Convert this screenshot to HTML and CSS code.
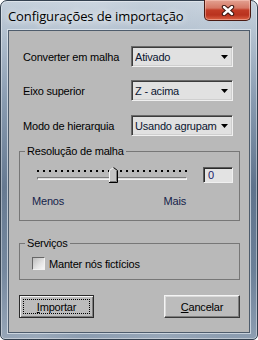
FILE: index.html
```html
<!DOCTYPE html>
<html>
<head>
<meta charset="utf-8">
<link rel="stylesheet" href="styles.css">
</head>
<body>
<div class="window">
  <div class="titlebar">
    <span class="title">Configurações de importação</span>
    <div class="close">
      <svg width="14" height="11" viewBox="0 0 14 11">
        <path d="M3 2 L11 9 M11 2 L3 9" stroke="#3c1712" stroke-width="4.4" stroke-linecap="round" fill="none"/>
        <path d="M3 2 L11 9 M11 2 L3 9" stroke="#fff" stroke-width="2.4" stroke-linecap="round" fill="none"/>
      </svg>
    </div>
  </div>
  <div class="client">
    <div class="row">
      <span class="lbl">Converter em malha</span>
      <div class="combo"><span class="val">Ativado</span><svg class="arrow" width="7" height="4" viewBox="0 0 7 4"><polygon points="0,0 7,0 3.5,4" fill="#000"/></svg></div>
    </div>
    <div class="row">
      <span class="lbl">Eixo superior</span>
      <div class="combo"><span class="val">Z - acima</span><svg class="arrow" width="7" height="4" viewBox="0 0 7 4"><polygon points="0,0 7,0 3.5,4" fill="#000"/></svg></div>
    </div>
    <div class="row">
      <span class="lbl">Modo de hierarquia</span>
      <div class="combo"><span class="val clip">Usando agrupamentos</span><svg class="arrow" width="7" height="4" viewBox="0 0 7 4"><polygon points="0,0 7,0 3.5,4" fill="#000"/></svg></div>
    </div>

    <fieldset class="group g1">
      <legend>Resolução de malha</legend>
      <div class="slider-row">
        <div class="slider">
          <div class="ticks">
            <i></i><i></i><i></i><i></i><i></i><i></i><i></i><i></i><i></i><i></i><i></i><i></i><i></i>
            <i></i><i></i><i></i><i></i><i></i><i></i><i></i><i></i><i></i><i></i><i></i><i></i><i></i>
          </div>
          <div class="track"></div>
          <svg class="thumb" style="left:72px" width="9" height="16" viewBox="0 0 9 16">
            <path d="M0.5 15.5 V3.5 L4.5 0.5 L8.5 3.5 V15.5 Z" fill="#c4c4c4"/>
            <polyline points="0.5,15 0.5,3.5 4.5,0.5" fill="none" stroke="#f4f4f4" stroke-width="1"/>
            <polyline points="4.5,0.5 8.5,3.5 8.5,15.5 0,15.5" fill="none" stroke="#000" stroke-width="1"/>
            <polyline points="7.5,4 7.5,14.5 1,14.5" fill="none" stroke="#7a7a7a" stroke-width="1"/>
          </svg>
        </div>
        <div class="num">0</div>
      </div>
      <div class="range-labels"><span>Menos</span><span>Mais</span></div>
    </fieldset>

    <fieldset class="group g2">
      <legend>Serviços</legend>
      <label class="check"><span class="box"></span><span>Manter nós fictícios</span></label>
    </fieldset>

    <div class="buttons">
      <button class="btn default"><span class="focus"><u>I</u>mportar</span></button>
      <button class="btn"><span class="nofocus"><u>C</u>ancelar</span></button>
    </div>
  </div>
</div>
</body>
</html>
```

FILE: styles.css
```css
* { box-sizing: border-box; margin: 0; padding: 0; }
html, body { width: 258px; height: 340px; overflow: hidden; background: #fff; }
body {
  font-family: "Liberation Sans", Arial, sans-serif;
  font-size: 11px;
  letter-spacing: -0.2px;
  color: #000;
}

.window {
  width: 258px;
  height: 340px;
  border: 1px solid #33404f;
  border-radius: 7px 7px 5px 5px;
  background:
    linear-gradient(100deg, rgba(255,255,255,0) 0%, rgba(255,255,255,0.12) 30%, rgba(255,255,255,0) 45%, rgba(255,255,255,0.1) 70%, rgba(255,255,255,0) 90%),
    linear-gradient(180deg, #c4cfdb 0%, #b2c0cf 9%, #8598ae 30%, #5f738c 55%, #6c8098 80%, #8e9eb1 100%);
  box-shadow: inset 0 0 0 1px rgba(255,255,255,0.4);
  display: flex;
  flex-direction: column;
  padding: 0 7px 6px 7px;
}

.titlebar {
  height: 29px;
  display: flex;
  align-items: flex-start;
  justify-content: space-between;
}
.title {
  font-family: "Open Sans", "Noto Sans", sans-serif;
  font-size: 13px;
  letter-spacing: -0.1px;
  line-height: 18px;
  padding-top: 6px;
  color: #000;
  text-shadow: 0 0 6px rgba(255,255,255,0.9), 0 0 10px rgba(255,255,255,0.8);
}
.close {
  width: 47px;
  height: 21px;
  margin-top: -1px;
  margin-right: -1px;
  border: 1px solid #4b1a12;
  border-top: none;
  border-radius: 0 0 5px 5px;
  background: linear-gradient(180deg, #e3a292 0%, #d57865 40%, #c23c26 50%, #b9321e 75%, #dc6244 100%);
  box-shadow: inset 0 0 0 1px rgba(255,210,200,0.45);
  display: flex;
  align-items: center;
  justify-content: center;
}

.client {
  width: 242px;
  height: 303px;
  border: 1px solid #4e5c6c;
  box-shadow: 0 0 0 1px rgba(232,238,244,0.65);
  background: #b9b9b9;
  padding: 15px 10px 0 10px;
  display: flex;
  flex-direction: column;
}

.row {
  height: 21px;
  display: flex;
  align-items: center;
  padding-left: 4px;
  margin-bottom: 13px;
}
.row:nth-child(2) { margin-bottom: 14px; }
.row:nth-child(3) { margin-bottom: 9px; }
.lbl { width: 108px; }
.combo {
  width: 102px;
  height: 21px;
  display: flex;
  align-items: center;
  background: #e1e1e1;
  border: 1px solid;
  border-color: #6a6a6a #f0f0f0 #f0f0f0 #6a6a6a;
  box-shadow: inset 1px 1px #3c3c3c, inset -1px -1px #cfcfcf;
  padding: 0 4px 0 3px;
  color: #0b1530;
}
.val { flex: 1; overflow: hidden; white-space: nowrap; padding-top: 1px; }
.val.clip { flex: none; width: 82px; }
.arrow { flex: none; margin-left: auto; }

.group {
  border: 1px solid #777;
  padding: 0;
  width: 221px;
}
.group legend {
  margin-left: 5px;
  padding: 0 2px;
  line-height: 13px;
}
.g1 { padding-bottom: 12px; }
.g2 { margin-top: 16px; padding-bottom: 9px; }

.slider-row {
  margin-top: 9px;
  height: 16px;
  display: flex;
  align-items: flex-start;
  padding-left: 17px;
}
.slider {
  position: relative;
  width: 150px;
  height: 16px;
}
.ticks {
  margin-top: 3px;
  height: 2px;
  display: flex;
  justify-content: space-between;
}
.ticks i { display: block; width: 2px; height: 2px; background: #000; }
.track {
  margin-top: 5px;
  height: 3px;
  border-top: 1px solid #7c7c7c;
  border-left: 1px solid #7c7c7c;
  border-bottom: 1px solid #f4f4f4;
  border-right: 1px solid #f4f4f4;
  background: #dcdcdc;
}
.thumb { position: absolute; top: 0; }
.num {
  margin-left: 16px;
  width: 30px;
  height: 16px;
  background: #e3e3e3;
  border: 1px solid;
  border-color: #5a5a5a #f0f0f0 #f0f0f0 #5a5a5a;
  box-shadow: inset 1px 1px #2a2a2a;
  padding-left: 4px;
  line-height: 14px;
  color: #1a1a6a;
}
.range-labels {
  margin-top: 12px;
  margin-left: 12px;
  width: 154px;
  line-height: 13px;
  display: flex;
  justify-content: space-between;
  color: #15234a;
}

.check {
  margin-top: 7px;
  margin-left: 12px;
  height: 13px;
  display: flex;
  align-items: center;
  gap: 4px;
}
.box {
  width: 13px;
  height: 13px;
  border: 1px solid;
  border-color: #666 #f2f2f2 #f2f2f2 #666;
  background: linear-gradient(135deg, #bdbdbd 0%, #e4e4e4 60%, #f6f6f6 100%);
}

.buttons {
  margin-top: 15px;
  width: 221px;
  display: flex;
  justify-content: space-between;
}
.btn {
  width: 75px;
  height: 23px;
  font: inherit;
  letter-spacing: inherit;
  color: #000;
  background: #bcbcbc;
  border: 1px solid;
  border-color: #f4f4f4 #3a3a3a #3a3a3a #f4f4f4;
  box-shadow: inset -1px -1px #7e7e7e, inset 1px 1px #dadada;
  padding: 3px;
  display: flex;
}
.btn.default {
  border-color: #2a2a2a;
  box-shadow: inset 1px 1px #f4f4f4, inset -1px -1px #7e7e7e;
}
.btn:last-child { width: 76px; }
.focus, .nofocus {
  flex: 1;
  display: flex;
  align-items: center;
  justify-content: center;
  border: 1px dotted #000;
}
.nofocus { border-color: transparent; }
```
